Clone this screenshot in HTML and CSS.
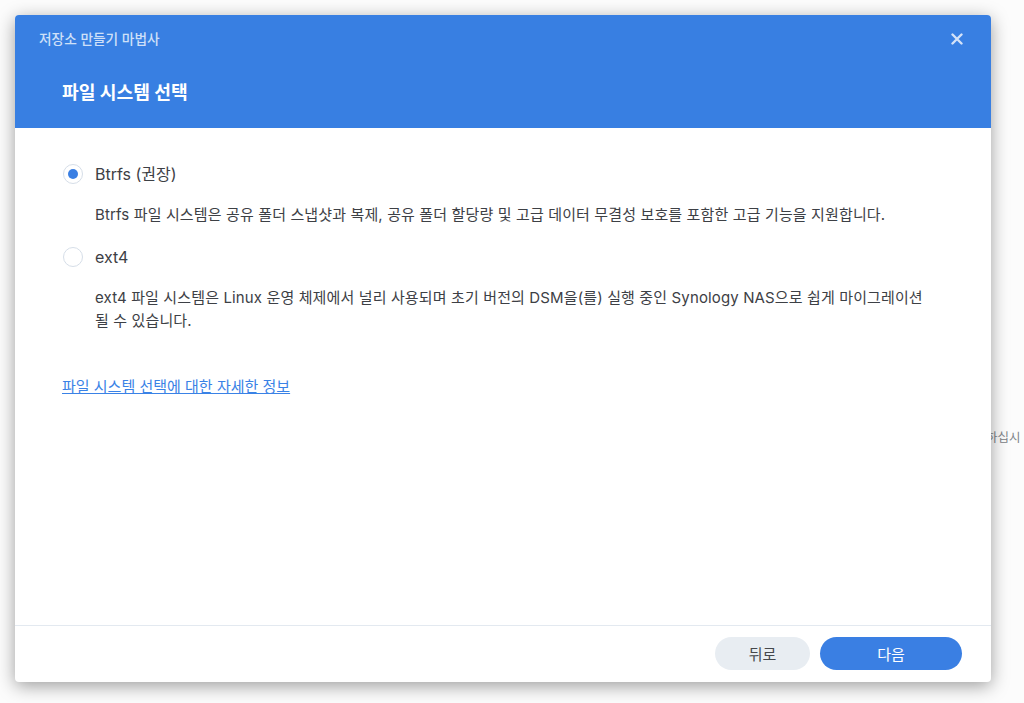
FILE: index.html
```html
<!DOCTYPE html>
<html lang="ko">
<head>
<meta charset="utf-8">
<title>저장소 만들기 마법사</title>
<link rel="stylesheet" href="styles.css">
</head>
<body>
<div class="page">
  <p class="bg-text">하십시</p>
</div>
<div class="dialog">
  <header class="dlg-head">
    <div class="dlg-title-row">
      <span class="dlg-title">저장소 만들기 마법사</span>
      <button class="close" aria-label="닫기">
        <svg width="12" height="12" viewBox="0 0 12 12"><path d="M1.5 1.5 L10.5 10.5 M10.5 1.5 L1.5 10.5" stroke="currentColor" stroke-width="2.4" stroke-linecap="round"/></svg>
      </button>
    </div>
    <h1 class="step-title">파일 시스템 선택</h1>
  </header>
  <main class="dlg-body">
    <label class="opt">
      <span class="radio checked"><span class="dot"></span></span>
      <span class="opt-label">Btrfs (권장)</span>
    </label>
    <p class="desc">Btrfs 파일 시스템은 공유 폴더 스냅샷과 복제, 공유 폴더 할당량 및 고급 데이터 무결성 보호를 포함한 고급 기능을 지원합니다.</p>
    <label class="opt">
      <span class="radio"></span>
      <span class="opt-label">ext4</span>
    </label>
    <p class="desc">ext4 파일 시스템은 Linux 운영 체제에서 널리 사용되며 초기 버전의 DSM을(를) 실행 중인 Synology NAS으로 쉽게 마이그레이션될 수 있습니다.</p>
    <a class="more" href="#">파일 시스템 선택에 대한 자세한 정보</a>
  </main>
  <footer class="dlg-foot">
    <button class="btn back">뒤로</button>
    <button class="btn next">다음</button>
  </footer>
</div>
</body>
</html>
```

FILE: styles.css
```css
html, body {
  margin: 0;
  padding: 0;
  height: 100%;
  overflow: hidden;
  background: #fcfcfc;
  font-family: "Inter", "Noto Sans CJK KR", sans-serif;
}
.page {
  height: 100%;
  display: flex;
  align-items: flex-start;
}
.bg-text {
  margin: 429px 0 0 986px;
  white-space: nowrap;
  font-size: 12.5px;
  line-height: 18px;
  color: #808489;
}
.dialog {
  position: absolute;
  left: 15px;
  top: 15px;
  width: 976px;
  height: 667px;
  background: #fff;
  border-radius: 4px;
  box-shadow: 0 4px 18px rgba(0,0,0,0.38);
  display: flex;
  flex-direction: column;
  overflow: hidden;
}
.dlg-head {
  background: #387fe2;
  padding: 16px 24px 24px 24px;
  height: 113px;
  box-sizing: border-box;
}
.dlg-title-row {
  display: flex;
  justify-content: space-between;
  align-items: center;
  height: 16px;
}
.dlg-title {
  font-size: 13.7px;
  line-height: 16px;
  color: #cfe0f8;
  font-weight: 500;
}
.close {
  border: 0;
  background: none;
  padding: 0;
  margin-right: 4px;
  color: #d3e2f8;
  display: flex;
}
.step-title {
  margin: 33px 0 0 23px;
  font-size: 18.2px;
  line-height: 24px;
  font-weight: 700;
  color: #fff;
}
.dlg-body {
  flex: 1;
  padding: 34px 47px 0 48px;
  color: #3d4045;
}
.opt {
  display: flex;
  align-items: center;
  gap: 12px;
  height: 24px;
}
.radio {
  width: 20px;
  height: 20px;
  box-sizing: border-box;
  border: 1px solid #d6dee8;
  border-radius: 50%;
  display: flex;
  align-items: center;
  justify-content: center;
  background: #fff;
}
.dot {
  width: 10px;
  height: 10px;
  border-radius: 50%;
  background: #3a7fe3;
}
.opt-label {
  font-size: 16px;
  line-height: 24px;
  color: #3d4045;
}
.desc {
  margin: 17px 0 19px 32px;
  font-size: 15px;
  line-height: 23px;
  letter-spacing: 0.13px;
  color: #3d4045;
  max-width: 835px;
}
.more {
  display: inline-block;
  margin: 26px 0 0 -1px;
  font-size: 15px;
  line-height: 20px;
  color: #3a82e6;
  text-decoration: underline;
}
.dlg-foot {
  border-top: 1px solid #e3e9f0;
  height: 57px;
  box-sizing: border-box;
  display: flex;
  justify-content: flex-end;
  align-items: center;
  gap: 10px;
  padding: 0 29px 1px 0;
}
.btn {
  height: 33px;
  border: 0;
  border-radius: 17px;
  font-family: inherit;
  font-size: 15px;
}
.back {
  width: 95px;
  background: #e8edf2;
  color: #45484c;
}
.next {
  width: 142px;
  background: #3a7fe3;
  color: #fff;
}
```
